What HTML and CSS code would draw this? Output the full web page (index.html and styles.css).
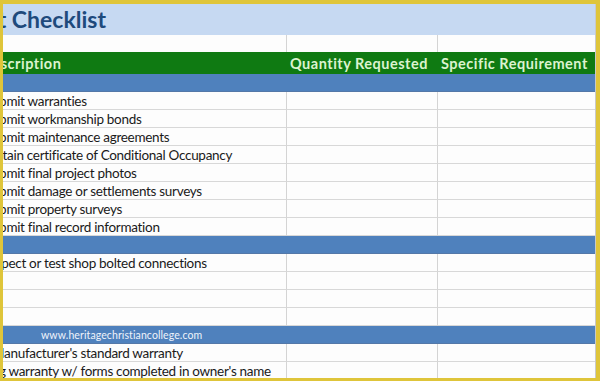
FILE: index.html
```html
<!DOCTYPE html>
<html lang="en">
<head>
<meta charset="utf-8">
<title>Closeout Checklist</title>
<link rel="stylesheet" href="styles.css">
</head>
<body>
<div class="frame">
  <div class="sheet">
    <div class="title-row"><span class="title">Closeout Checklist</span></div>

    <div class="row blank"><div class="c a"></div><div class="c b"></div><div class="c cc"></div></div>

    <div class="row head">
      <div class="c a"><span class="desc desc-h">Description</span></div>
      <div class="c b">Quantity Requested</div>
      <div class="c cc">Specific Requirement</div>
    </div>

    <div class="band"></div>

    <div class="row"><div class="c a"><span class="desc">Submit warranties</span></div><div class="c b"></div><div class="c cc"></div></div>
    <div class="row"><div class="c a"><span class="desc">Submit workmanship bonds</span></div><div class="c b"></div><div class="c cc"></div></div>
    <div class="row"><div class="c a"><span class="desc">Submit maintenance agreements</span></div><div class="c b"></div><div class="c cc"></div></div>
    <div class="row"><div class="c a"><span class="desc">Obtain certificate of Conditional Occupancy</span></div><div class="c b"></div><div class="c cc"></div></div>
    <div class="row"><div class="c a"><span class="desc">Submit final project photos</span></div><div class="c b"></div><div class="c cc"></div></div>
    <div class="row"><div class="c a"><span class="desc">Submit damage or settlements surveys</span></div><div class="c b"></div><div class="c cc"></div></div>
    <div class="row"><div class="c a"><span class="desc">Submit property surveys</span></div><div class="c b"></div><div class="c cc"></div></div>
    <div class="row"><div class="c a"><span class="desc">Submit final record information</span></div><div class="c b"></div><div class="c cc"></div></div>

    <div class="band"></div>

    <div class="row"><div class="c a"><span class="desc">Inspect or test shop bolted connections</span></div><div class="c b"></div><div class="c cc"></div></div>
    <div class="row"><div class="c a"></div><div class="c b"></div><div class="c cc"></div></div>
    <div class="row"><div class="c a"></div><div class="c b"></div><div class="c cc"></div></div>
    <div class="row"><div class="c a"></div><div class="c b"></div><div class="c cc"></div></div>

    <div class="band"><span class="mark">www.heritagechristiancollege.com</span></div>

    <div class="row"><div class="c a"><span class="desc desc-m">Manufacturer's standard warranty</span></div><div class="c b"></div><div class="c cc"></div></div>
    <div class="row"><div class="c a"><span class="desc desc-r">Roofing warranty w/ forms completed in owner's name</span></div><div class="c b"></div><div class="c cc"></div></div>
  </div>
</div>
</body>
</html>
```
FILE: styles.css
```css
html, body {
  margin: 0;
  padding: 0;
}
body {
  width: 600px;
  height: 381px;
  overflow: hidden;
  background: #dfc53a;
  font-family: Lato, "Open Sans", "Liberation Sans", sans-serif;
}
.frame {
  box-sizing: border-box;
  width: 600px;
  height: 381px;
  padding: 4px 4px 3px 3px;
}
.sheet {
  width: 593px;
  height: 374px;
  overflow: hidden;
  background: #fdfdfd;
  border-right: 1px solid #c9c9c9;
  box-sizing: border-box;
}
.title-row {
  height: 31px;
  background: #c6d9f2;
  overflow: hidden;
  white-space: nowrap;
  display: flex;
  align-items: center;
}
.title {
  font-weight: 700;
  font-size: 23px;
  color: #1e4a7c;
  margin-left: -88px;
  line-height: 31px;
}
.row {
  display: grid;
  grid-template-columns: 284px 151px 1fr;
  height: 18px;
}
.c {
  box-sizing: border-box;
  border-right: 1px solid #d4d4d4;
  border-bottom: 1px solid #d8d8d8;
  overflow: hidden;
  white-space: nowrap;
  font-size: 13.5px;
  letter-spacing: -0.3px;
  padding-top: 1px;
  line-height: 17px;
  color: #1a1a1a;
}
.c.cc {
  border-right: none;
}
.desc {
  display: inline-block;
  margin-left: -18px;
}
.desc-m {
  margin-left: -11px;
}
.desc-r {
  margin-left: -41px;
}
.blank {
  height: 17px;
}
.blank .c {
  border-bottom: none;
}
.head {
  height: 22px;
  background: #0f7a12;
}
.head .c {
  border: none;
  padding-top: 1px;
  color: #dcf3cf;
  font-weight: 700;
  font-size: 14.5px;
  letter-spacing: 0.5px;
  line-height: 21px;
}
.head .desc-h {
  margin-left: -22px;
}
.head .b {
  padding-left: 3px;
}
.head .cc {
  padding-left: 3px;
}
.band {
  height: 18px;
  background: #4f81bd;
  border-bottom: 1px solid #5478a8;
  box-sizing: border-box;
  display: flex;
  align-items: center;
}
.mark {
  margin-left: 38px;
  color: #eef3fb;
  font-size: 10.5px;
  letter-spacing: 0.1px;
}
```
